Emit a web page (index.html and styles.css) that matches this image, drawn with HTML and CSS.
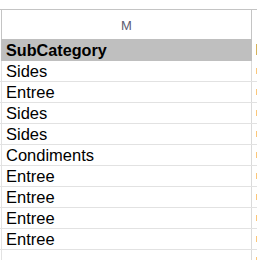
FILE: index.html
```html
<!DOCTYPE html>
<html>
<head>
<meta charset="utf-8">
<link rel="stylesheet" href="styles.css">
</head>
<body>
<div class="sheet">
  <div class="colhead">
    <div class="colhead-cell">M</div>
    <div class="colhead-next"></div>
  </div>
  <div class="row title">
    <div class="cell">SubCategory</div>
    <div class="next"><span class="mark tan"></span></div>
  </div>
  <div class="row"><div class="cell">Sides</div><div class="next"><span class="mark"></span></div></div>
  <div class="row"><div class="cell">Entree</div><div class="next"><span class="mark"></span></div></div>
  <div class="row"><div class="cell">Sides</div><div class="next"><span class="mark"></span></div></div>
  <div class="row"><div class="cell">Sides</div><div class="next"><span class="mark"></span></div></div>
  <div class="row"><div class="cell">Condiments</div><div class="next"><span class="mark"></span></div></div>
  <div class="row"><div class="cell">Entree</div><div class="next"><span class="mark"></span></div></div>
  <div class="row"><div class="cell">Entree</div><div class="next"><span class="mark"></span></div></div>
  <div class="row"><div class="cell">Entree</div><div class="next"><span class="mark"></span></div></div>
  <div class="row"><div class="cell">Entree</div><div class="next"><span class="mark"></span></div></div>
  <div class="row"><div class="cell"></div><div class="next"><span class="mark"></span></div></div>
</div>
</body>
</html>
```

FILE: styles.css
```css
html, body {
  margin: 0;
  padding: 0;
  background: #ffffff;
  overflow: hidden;
}

.sheet {
  width: 257px;
  height: 260px;
  padding-top: 9px;
  box-sizing: border-box;
  overflow: hidden;
  font-family: "Liberation Sans", Arial, sans-serif;
}

/* column letter strip */
.colhead {
  display: flex;
  border-top: 1px solid #c4c4c4;
  height: 29px;
}

.colhead-cell {
  margin-left: 1px;
  width: 249px;
  border-left: 1px solid #c4c4c4;
  border-right: 1px solid #c4c4c4;
  display: flex;
  align-items: center;
  justify-content: center;
  font-size: 13px;
  color: #5c5c70;
  padding-top: 2px;
  box-sizing: content-box;
}

.colhead-next {
  flex: 1;
}

/* data rows */
.row {
  display: flex;
  height: 20px;
  border-bottom: 1px solid #e2e2e2;
}

.cell {
  margin-left: 1px;
  width: 245px;
  height: 20px;
  box-sizing: content-box;
  padding-left: 4px;
  border-left: 1px solid #e2e2e2;
  border-right: 1px solid #dadada;
  font-size: 16.5px;
  line-height: 21px;
  color: #000000;
  white-space: nowrap;
  overflow: hidden;
}

.next {
  flex: 1;
  display: flex;
  justify-content: flex-end;
}

.mark {
  width: 1px;
  height: 6px;
  margin-top: 7px;
  background: #fbc77a;
}

/* header row with grey fill */
.row.title {
  height: 22px;
  border-bottom: none;
}

.row.title .cell {
  height: 22px;
  background: #bfbfbf;
  border-left-color: #bfbfbf;
  border-right-color: #bfbfbf;
  font-size: 16.2px;
  font-weight: bold;
  line-height: 23px;
}

.mark.tan {
  height: 11px;
  margin-top: 5px;
  background: #d5b25a;
}
```
